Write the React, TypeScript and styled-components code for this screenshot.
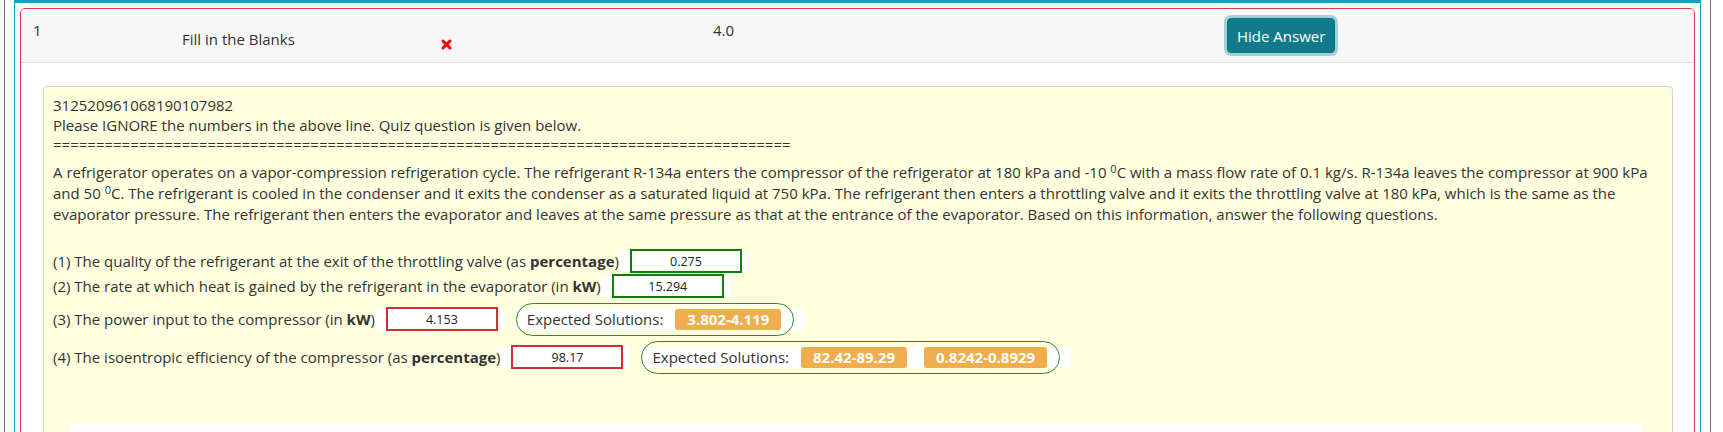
import React from "react";
import styled, { createGlobalStyle } from "styled-components";

const Global = createGlobalStyle`
  html, body { margin: 0; padding: 0; background: #fff; }
  body {
    font-family: "Open Sans", "Noto Sans", sans-serif;
    color: #333;
    overflow: hidden;
  }
`;

const Outer = styled.div`
  margin-left: 4px;
  width: 1707px;
  height: 432px;
  box-sizing: border-box;
  border-left: 1px solid #6c757d;
  border-right: 1px solid #6c757d;
  padding: 0 9px;
  overflow: hidden;
`;

const Panel = styled.div`
  border: 1px solid #17a2b8;
  border-top-width: 3px;
  border-bottom: none;
  padding: 5px 5px 0;
  height: 100%;
  box-sizing: border-box;
`;

const Card = styled.div`
  border: 1px solid #dc3545;
  border-radius: 5px;
  height: 520px;
  overflow: hidden;
`;

const Header = styled.div`
  height: 53px;
  background: #f7f7f7;
  border-bottom: 1px solid #dcdcdc;
  display: grid;
  grid-template-columns: 149px 259px 272px 514px auto;
  align-items: start;
  padding-left: 12px;
  font-size: 15px;
  line-height: 21px;
`;

const Cell = styled.div<{ $top: number }>`
  margin-top: ${(p) => p.$top}px;
  white-space: nowrap;
`;

const HideButton = styled.button`
  margin-top: 9px;
  height: 35px;
  padding: 0 9px;
  border: 1px solid #10707f;
  border-radius: 4px;
  background: #117a8b;
  color: #fff;
  font-family: "Open Sans", "Noto Sans", sans-serif;
  font-size: 15px;
  box-shadow: 0 0 0 3px #9fd4dd;
  cursor: pointer;
`;

const Body = styled.div`
  padding: 23px 21px 0 22px;
`;

const Question = styled.div`
  background: #ffffe0;
  border: 1px solid #d2d2d2;
  border-radius: 4px;
  padding: 9px 9px 0;
  height: 420px;
  box-sizing: border-box;
  font-size: 15px;
`;

const Intro = styled.div`
  line-height: 19.5px;
  white-space: nowrap;
`;

const Paragraph = styled.p`
  margin: 7px 0 0;
  line-height: 21px;
  white-space: nowrap;

  sup {
    font-size: 11px;
    line-height: 0;
    vertical-align: 5px;
  }
`;

const Questions = styled.div`
  margin-top: 24px;
  display: flex;
  flex-direction: column;
`;

const Row = styled.div<{ $h: number; $mt: number }>`
  display: flex;
  align-items: center;
  height: ${(p) => p.$h}px;
  margin-top: ${(p) => p.$mt}px;
  white-space: nowrap;
`;

const AnswerWrap = styled.span`
  display: inline-flex;
  align-items: center;
  height: 21px;
  background: #fff;
  padding: 0 7px 0 11px;
`;

const AnswerBox = styled.input<{ $ok: boolean }>`
  width: 112px;
  height: 24px;
  box-sizing: border-box;
  border: 2px solid ${(p) => (p.$ok ? "#0a800a" : "#d0302f")};
  background: #fff;
  text-align: center;
  font-family: "Open Sans", "Noto Sans", sans-serif;
  font-size: 12.5px;
  color: #222;
  padding: 0;
  outline: none;
`;

const SolutionWrap = styled.span`
  display: inline-flex;
  align-items: center;
  height: 21px;
  background: #fff;
  margin-left: 11px;
  padding-right: 11px;
`;

const Solutions = styled.span`
  display: inline-flex;
  align-items: center;
  gap: 12px;
  height: 33px;
  box-sizing: border-box;
  border: 1px solid #2a8a2a;
  border-radius: 17px;
  padding: 0 12px 0 10px;
`;

const Badge = styled.span`
  display: inline-block;
  background: #f0ad4e;
  color: #fff;
  font-weight: 700;
  font-size: 15px;
  line-height: 21px;
  padding: 0 12px;
  border-radius: 3px;
  & + & {
    margin-left: 17px;
  }
`;

const Attachment = styled.div`
  margin: 50px 20px 0 17px;
  height: 30px;
  background: #fff;
`;

const CrossIcon = () => (
  <svg width="11" height="11" viewBox="0 0 11 11" aria-label="wrong">
    <path d="M2 2 L9 9 M9 2 L2 9" stroke="#ff0000" strokeWidth="3" strokeLinecap="round" />
  </svg>
);

type Q = {
  label: React.ReactNode;
  value: string;
  ok: boolean;
  h: number;
  mt: number;
  solutions?: string[];
};

const questions: Q[] = [
  {
    label: (
      <>
        (1) The quality of the refrigerant at the exit of the throttling valve (as <b>percentage</b>)
      </>
    ),
    value: "0.275",
    ok: true,
    h: 25,
    mt: 0,
  },
  {
    label: (
      <>
        (2) The rate at which heat is gained by the refrigerant in the evaporator (in <b>kW</b>)
      </>
    ),
    value: "15.294",
    ok: true,
    h: 25,
    mt: 0,
  },
  {
    label: (
      <>
        (3) The power input to the compressor (in <b>kW</b>)
      </>
    ),
    value: "4.153",
    ok: false,
    h: 33,
    mt: 4,
    solutions: ["3.802-4.119"],
  },
  {
    label: (
      <>
        (4) The isoentropic efficiency of the compressor (as <b>percentage</b>)
      </>
    ),
    value: "98.17",
    ok: false,
    h: 33,
    mt: 5,
    solutions: ["82.42-89.29", "0.8242-0.8929"],
  },
];

export default function App() {
  return (
    <>
      <Global />
      <Outer>
        <Panel>
          <Card>
            <Header>
              <Cell $top={11}>1</Cell>
              <Cell $top={20}>Fill in the Blanks</Cell>
              <Cell $top={25}>
                <CrossIcon />
              </Cell>
              <Cell $top={11}>4.0</Cell>
              <div>
                <HideButton>Hide Answer</HideButton>
              </div>
            </Header>
            <Body>
              <Question>
                <Intro>
                  312520961068190107982
                  <br />
                  Please IGNORE the numbers in the above line. Quiz question is given below.
                  <br />
                  {"=".repeat(86)}
                </Intro>
                <Paragraph>
                  A refrigerator operates on a vapor-compression refrigeration cycle. The refrigerant R-134a enters the
                  compressor of the refrigerator at 180 kPa and -10 <sup>0</sup>C with a mass flow rate of 0.1 kg/s.
                  R-134a leaves the compressor at 900 kPa
                  <br />
                  and 50 <sup>0</sup>C. The refrigerant is cooled in the condenser and it exits the condenser as a
                  saturated liquid at 750 kPa. The refrigerant then enters a throttling valve and it exits the
                  throttling valve at 180 kPa, which is the same as the
                  <br />
                  evaporator pressure. The refrigerant then enters the evaporator and leaves at the same pressure as
                  that at the entrance of the evaporator. Based on this information, answer the following questions.
                </Paragraph>
                <Questions>
                  {questions.map((q, i) => (
                    <Row key={i} $h={q.h} $mt={q.mt}>
                      <span>{q.label}</span>
                      <AnswerWrap>
                        <AnswerBox $ok={q.ok} readOnly value={q.value} />
                      </AnswerWrap>
                      {q.solutions && (
                        <SolutionWrap>
                          <Solutions>
                            Expected Solutions:
                            <span>
                              {q.solutions.map((s) => (
                                <Badge key={s}>{s}</Badge>
                              ))}
                            </span>
                          </Solutions>
                        </SolutionWrap>
                      )}
                    </Row>
                  ))}
                </Questions>
                <Attachment />
              </Question>
            </Body>
          </Card>
        </Panel>
      </Outer>
    </>
  );
}
